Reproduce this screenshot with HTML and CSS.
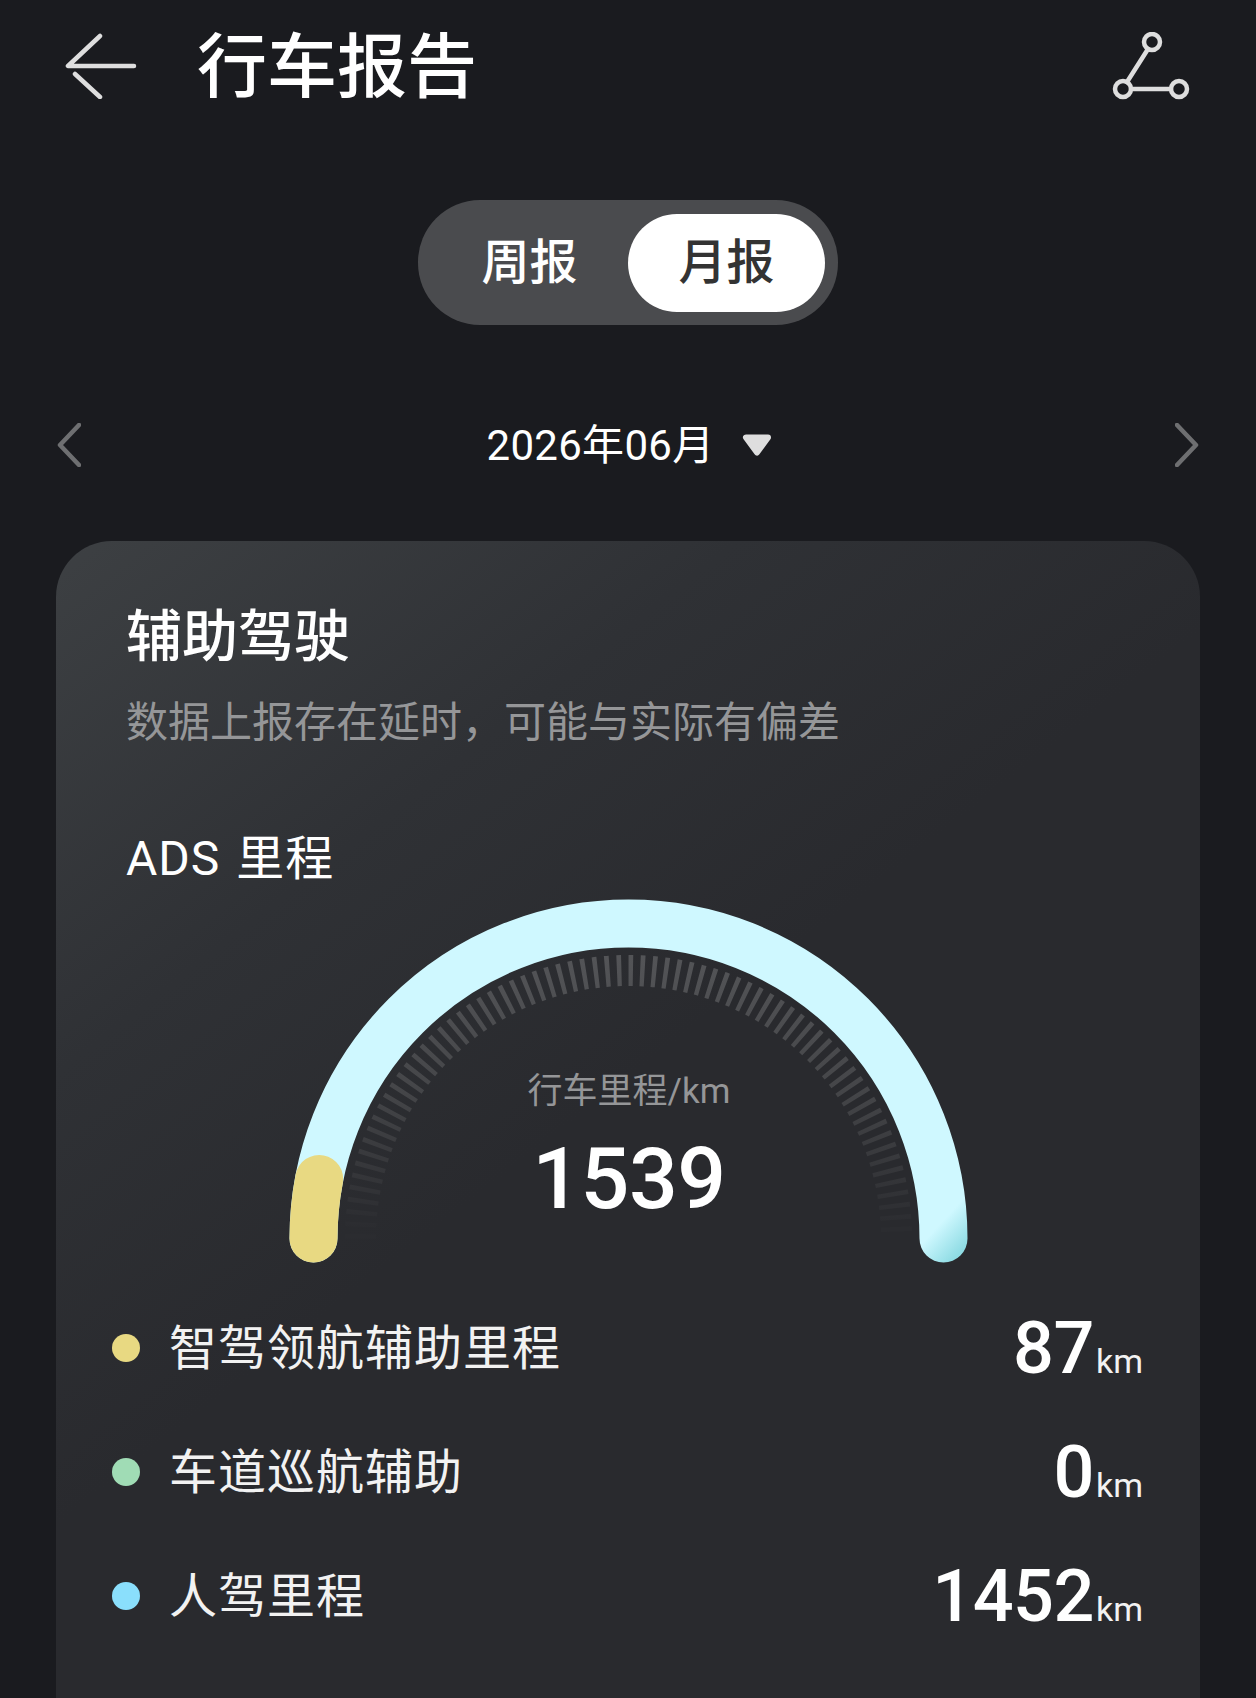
FILE: index.html
```html
<!DOCTYPE html>
<html lang="zh-CN">
<head>
<meta charset="utf-8">
<title>行车报告</title>
<link rel="stylesheet" href="styles.css">
</head>
<body>
<main class="page">
  <header class="topbar">
    <svg class="icon-back" viewBox="0 0 78 66" aria-hidden="true">
      <path d="M37 3 5 33H71M12 41 37 64"/>
    </svg>
    <h1 class="page-title">行车报告</h1>
    <svg class="icon-share" viewBox="0 0 78 68" aria-hidden="true">
      <circle cx="40" cy="10" r="8"/>
      <circle cx="11" cy="57" r="8"/>
      <circle cx="67" cy="57" r="8"/>
      <path d="M36 17 15 50M19 57H59"/>
    </svg>
  </header>

  <div class="period-switch">
    <span class="period-option">周报</span>
    <span class="period-option is-active">月报</span>
  </div>

  <div class="date-row">
    <svg class="chevron" viewBox="0 0 24 44" aria-hidden="true"><path d="M22 2 3 22 22 42"/></svg>
    <div class="date-picker">
      <span class="date-label">2026年06月</span>
      <svg class="caret" viewBox="0 0 30 22" aria-hidden="true"><path d="M4 3.5H26L15 18.5Z"/></svg>
    </div>
    <svg class="chevron" viewBox="0 0 24 44" aria-hidden="true"><path d="M2 2 21 22 2 42"/></svg>
  </div>

  <section class="card">
    <h2 class="card-title">辅助驾驶</h2>
    <p class="card-note">数据上报存在延时，可能与实际有偏差</p>
    <h3 class="card-subtitle">ADS 里程</h3>

    <div class="gauge">
      <svg class="gauge-art" viewBox="0 0 700 390" aria-hidden="true">
        <defs>
          <linearGradient id="tickFade" gradientUnits="userSpaceOnUse" x1="0" y1="60" x2="0" y2="340">
            <stop offset="0" stop-color="#545558"/>
            <stop offset="0.5" stop-color="#454649"/>
            <stop offset="1" stop-color="#2b2c30"/>
          </linearGradient>
          <linearGradient id="arcTail" gradientUnits="userSpaceOnUse" x1="663" y1="335" x2="688" y2="358">
            <stop offset="0" stop-color="#cff8ff"/>
            <stop offset="1" stop-color="#8fdce4"/>
          </linearGradient>
        </defs>
        <path class="gauge-ticks" d="M82.5 350.5A268 268 0 0 1 618.5 350.5"/>
        <path class="gauge-track" d="M35.5 350.5A315 315 0 0 1 665.5 350.5"/>
        <path class="gauge-assist" d="M35.5 350.5A315 315 0 0 1 41.2 291"/>
      </svg>
      <div class="gauge-readout">
        <div class="gauge-label">行车里程/km</div>
        <div class="gauge-value">1539</div>
      </div>
    </div>

    <ul class="legend">
      <li class="legend-row">
        <span class="dot dot-yellow"></span>
        <span class="legend-name">智驾领航辅助里程</span>
        <span class="legend-value">87<small>km</small></span>
      </li>
      <li class="legend-row">
        <span class="dot dot-green"></span>
        <span class="legend-name">车道巡航辅助</span>
        <span class="legend-value">0<small>km</small></span>
      </li>
      <li class="legend-row">
        <span class="dot dot-blue"></span>
        <span class="legend-name">人驾里程</span>
        <span class="legend-value">1452<small>km</small></span>
      </li>
    </ul>
  </section>
</main>
</body>
</html>
```
FILE: styles.css
```css
* {
  box-sizing: border-box;
}

html,
body {
  margin: 0;
  padding: 0;
  background: #1a1b1f;
}

body {
  height: 1698px;
  overflow: hidden;
  color: #fff;
  font-family: Roboto, "Noto Sans CJK SC", sans-serif;
}

.page {
  display: flex;
  flex-direction: column;
  height: 1698px;
}

/* top bar */
.topbar {
  display: flex;
  align-items: center;
  height: 132px;
  padding: 0 66px 0 63px;
}

.icon-back {
  width: 78px;
  height: 66px;
  flex: none;
  fill: none;
  stroke: #dedede;
  stroke-width: 4.5;
  stroke-linecap: round;
  stroke-linejoin: round;
}

.page-title {
  margin: 4px 0 0 56px;
  font-size: 70px;
  line-height: 80px;
  font-weight: 500;
}

.icon-share {
  width: 78px;
  height: 68px;
  margin-left: auto;
  flex: none;
  fill: none;
  stroke: #dedede;
  stroke-width: 4.5;
  stroke-linecap: round;
}

/* weekly / monthly switch */
.period-switch {
  align-self: center;
  display: flex;
  align-items: center;
  width: 420px;
  height: 125px;
  margin-top: 68px;
  padding: 0 13px;
  border-radius: 62px;
  background: #4a4b4e;
}

.period-option {
  flex: 1;
  height: 98px;
  border-radius: 49px;
  font-size: 48px;
  line-height: 98px;
  text-align: center;
  font-weight: 500;
}

.period-option.is-active {
  background: #fff;
  color: #333;
}

/* month selector */
.date-row {
  display: flex;
  align-items: center;
  justify-content: space-between;
  height: 80px;
  margin-top: 80px;
  padding: 0 57px;
}

.chevron {
  width: 24px;
  height: 44px;
  flex: none;
  fill: none;
  stroke: #6e6f71;
  stroke-width: 4.5;
  stroke-linecap: round;
  stroke-linejoin: round;
}

.date-picker {
  display: flex;
  align-items: center;
  gap: 27px;
  padding-left: 2px;
}

.date-label {
  padding-top: 2px;
  font-size: 42px;
  line-height: 60px;
  letter-spacing: 0.3px;
}

.caret {
  width: 30px;
  height: 22px;
  fill: #dedede;
  stroke: #dedede;
  stroke-width: 6;
  stroke-linejoin: round;
}

/* card */
.card {
  flex: 1;
  margin: 56px 56px 0;
  padding-top: 61px;
  border-radius: 56px 56px 0 0;
  background: linear-gradient(142deg, #3d4043 0, #2f3135 26%, #292a2e 48%);
}

.card-title {
  margin: 0;
  padding-left: 70px;
  font-size: 56px;
  line-height: 70px;
  font-weight: 500;
}

.card-note {
  margin: 26px 0 0;
  padding-left: 70px;
  font-size: 42px;
  line-height: 50px;
  color: #959698;
}

.card-subtitle {
  margin: 81px 0 0;
  padding-left: 70px;
  font-size: 48px;
  line-height: 60px;
  font-weight: 400;
  letter-spacing: 1px;
  word-spacing: 3px;
}

/* half-circle gauge: art and readout share one grid cell */
.gauge {
  display: grid;
  justify-items: center;
  height: 389px;
}

.gauge-art,
.gauge-readout {
  grid-area: 1 / 1;
}

.gauge-art {
  width: 700px;
  height: 390px;
  margin-top: -1px;
  fill: none;
}

.gauge-ticks {
  stroke: url(#tickFade);
  stroke-width: 31;
  stroke-dasharray: 4.5 7.19;
}

.gauge-track {
  stroke: url(#arcTail);
  stroke-width: 48;
  stroke-linecap: round;
}

.gauge-assist {
  stroke: #e8d982;
  stroke-width: 48;
  stroke-linecap: round;
}

.gauge-readout {
  padding: 181px 0 0 2px;
  text-align: center;
}

.gauge-label {
  font-size: 35px;
  line-height: 44px;
  color: #959698;
}

.gauge-value {
  margin-top: 20px;
  font-size: 86px;
  line-height: 90px;
  font-weight: 500;
  letter-spacing: -0.5px;
}

/* legend rows */
.legend {
  list-style: none;
  margin: 8px 0 0;
  padding: 0 57px 0 56px;
}

.legend-row {
  display: flex;
  align-items: center;
  height: 124px;
}

.dot {
  width: 28px;
  height: 28px;
  flex: none;
  border-radius: 50%;
}

.dot-yellow {
  background: #e8d982;
}

.dot-green {
  background: #a0dcb5;
}

.dot-blue {
  background: #8adffc;
}

.legend-name {
  margin-left: 29px;
  padding-top: 2px;
  font-size: 48px;
  line-height: 60px;
  letter-spacing: 1px;
  color: #f2f2f2;
}

.legend-value {
  margin: 14px 0 0 auto;
  font-size: 72px;
  line-height: 80px;
  font-weight: 500;
  letter-spacing: -0.5px;
}

.legend-value small {
  margin-left: 2px;
  font-size: 34px;
  font-weight: 400;
  letter-spacing: 0;
  color: #f2f2f2;
}
```
